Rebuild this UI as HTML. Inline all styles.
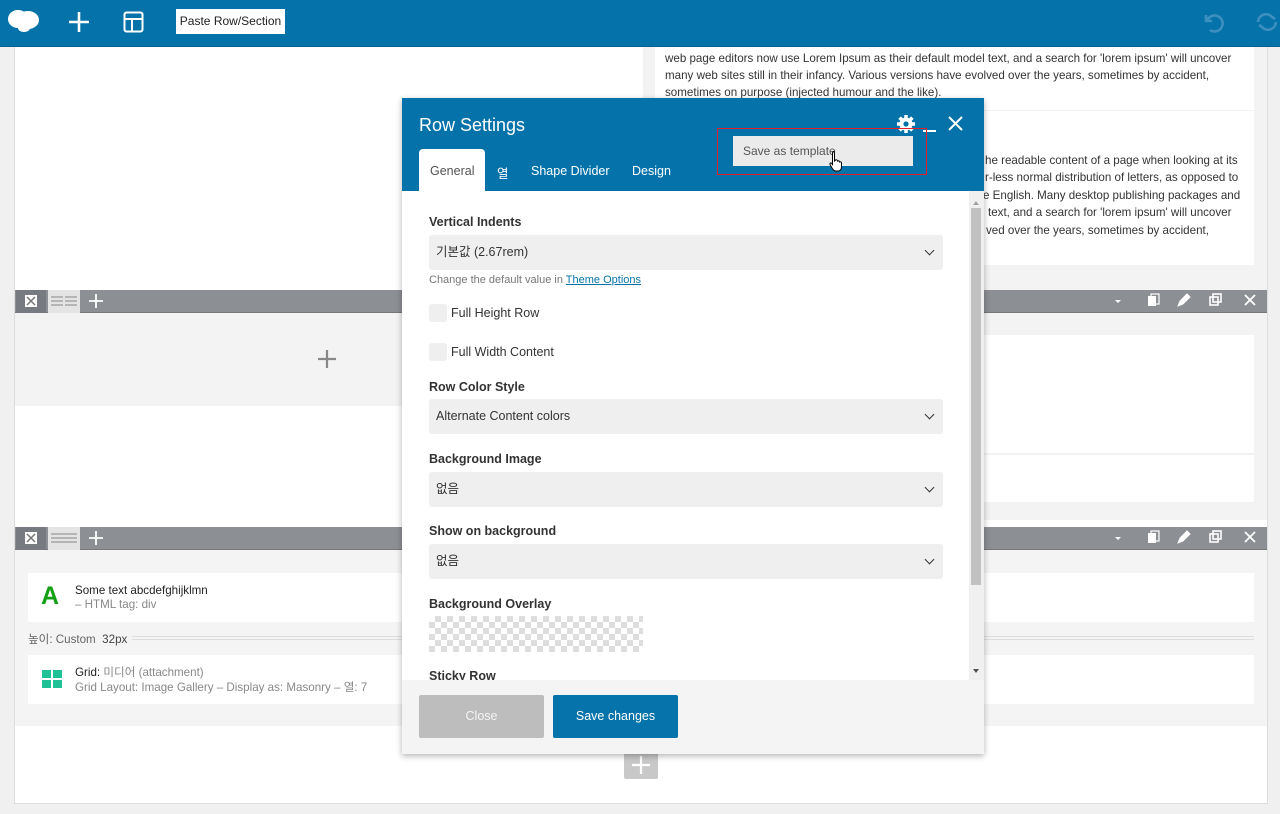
<!DOCTYPE html>
<html><head><meta charset="utf-8">
<style>
*{box-sizing:border-box;margin:0;padding:0}
body{width:1280px;height:814px;overflow:hidden;background:#f0f0f0;font-family:"Liberation Sans","Noto Sans CJK KR",sans-serif;font-size:12px;color:#333;position:relative}
.a{position:absolute}
.top{left:0;top:0;width:1280px;height:47px;background:#0573aa;border-bottom:1px solid #04608f}
.paste{left:176px;top:9px;width:109px;height:25px;background:#fff;color:#222;font-size:12px;line-height:25px;text-align:center}
.main{left:14px;top:47px;width:1254px;height:757px;background:#fff;border:1px solid #ddd;border-top:none}
.tb{left:15px;width:1252px;height:23px;background:#8c8f94;border-bottom:1px solid #777}
.txt{font-size:11.6px;color:#333;white-space:nowrap;line-height:17px}
.card{background:#fff}
.modal{left:402px;top:98px;width:582px;height:656px;background:#fff;box-shadow:0 2px 6px rgba(0,0,0,.3)}
.mh{left:0;top:0;width:582px;height:93px;background:#0573aa}
.lbl{left:27px;font-weight:bold;font-size:12.5px;color:#333}
.sel{left:27px;width:514px;height:35px;background:#efefef;border-radius:3px;padding-left:7px;line-height:35px;font-size:12.5px;color:#333}
.sel:after{content:"";position:absolute;right:10px;top:12px;width:6px;height:6px;border-right:1.5px solid #333;border-bottom:1.5px solid #333;transform:rotate(45deg)}
.cb{left:27px;width:18px;height:18px;background:#efefef;border-radius:3px}
.cbl{left:49px;font-size:12.5px;color:#333}
.tab{top:65px;color:#fff;font-size:12.5px}
</style></head><body>
<div class="a top"></div>
<svg class="a" style="left:6px;top:8px" width="36" height="28" viewBox="0 0 36 28"><ellipse cx="12" cy="11" rx="10" ry="9" fill="#fff"/><ellipse cx="22" cy="12" rx="11" ry="9" fill="#fff"/><ellipse cx="18" cy="20" rx="6" ry="4" fill="#fff"/></svg>
<svg class="a" style="left:68px;top:11px" width="22" height="22"><path d="M11 1v20M1 11h20" stroke="#fff" stroke-width="2.6"/></svg>
<svg class="a" style="left:123px;top:11px" width="21" height="22"><rect x="1.5" y="1.5" width="18" height="19" rx="2" fill="none" stroke="#fff" stroke-width="2"/><path d="M2 8h17M9 8v12" stroke="#fff" stroke-width="2"/></svg>
<div class="a paste">Paste Row/Section</div>
<svg class="a" style="left:1200px;top:10px" width="26" height="24"><path d="M6 5v6h6M7 11a8 8 0 1 1 3 9" fill="none" stroke="#3c8fbf" stroke-width="2.6"/></svg>
<svg class="a" style="left:1254px;top:10px" width="26" height="24"><path d="M4 12a8 8 0 0 1 14-5l3 2M22 12a8 8 0 0 1-14 5l-3-2" fill="none" stroke="#3c8fbf" stroke-width="2.6"/></svg>

<div class="a main"></div>
<div class="a" style="left:643px;top:47px;width:624px;height:243px;background:#f3f3f3"></div>
<div class="a card" style="left:655px;top:47px;width:599px;height:63px"></div>
<div class="a card" style="left:655px;top:111px;width:599px;height:154px"></div>
<div class="a txt" style="left:665px;top:50px">web page editors now use Lorem Ipsum as their default model text, and a search for 'lorem ipsum' will uncover</div>
<div class="a txt" style="left:665px;top:67px">many web sites still in their infancy. Various versions have evolved over the years, sometimes by accident,</div>
<div class="a txt" style="left:665px;top:84px">sometimes on purpose (injected humour and the like).</div>
<div class="a txt" style="left:985px;top:152px">he readable content of a page when looking at its</div>
<div class="a txt" style="left:985px;top:169px">r-less normal distribution of letters, as opposed to</div>
<div class="a txt" style="left:983px;top:187px">e English. Many desktop publishing packages and</div>
<div class="a txt" style="left:988px;top:204px">text, and a search for 'lorem ipsum' will uncover</div>
<div class="a txt" style="left:986px;top:222px">ved over the years, sometimes by accident,</div>

<div class="a tb" style="top:290px"></div>
<div class="a" style="left:16px;top:290px;width:30px;height:23px;background:#777a80"></div>
<div class="a" style="left:48px;top:290px;width:32px;height:23px;background:#e4e4e4"></div>
<svg class="a" style="left:25px;top:295px" width="12" height="12"><rect width="12" height="12" fill="#fff"/><path d="M2 2l8 8M10 2l-8 8" stroke="#777" stroke-width="1.5"/></svg>
<svg class="a" style="left:50px;top:295px" width="28" height="12"><path d="M1 2h12M15 2h12M1 6h12M15 6h12M1 10h12M15 10h12" stroke="#999" stroke-width="1.3"/></svg>
<svg class="a" style="left:89px;top:294px" width="14" height="14"><path d="M7 0v14M0 7h14" stroke="#fff" stroke-width="1.8"/></svg>
<div class="a" style="left:15px;top:313px;width:388px;height:93px;background:#f3f3f3"></div>
<svg class="a" style="left:318px;top:350px" width="18" height="18"><path d="M9 0v18M0 9h18" stroke="#888" stroke-width="2.2"/></svg>
<div class="a" style="left:984px;top:313px;width:283px;height:207px;background:#f3f3f3"></div>
<div class="a card" style="left:984px;top:335px;width:270px;height:118px"></div>
<div class="a card" style="left:984px;top:455px;width:270px;height:47px"></div>

<div class="a tb" style="top:527px"></div>
<div class="a" style="left:16px;top:527px;width:30px;height:23px;background:#777a80"></div>
<div class="a" style="left:48px;top:527px;width:32px;height:23px;background:#e4e4e4"></div>
<svg class="a" style="left:25px;top:532px" width="12" height="12"><rect width="12" height="12" fill="#fff"/><path d="M2 2l8 8M10 2l-8 8" stroke="#777" stroke-width="1.5"/></svg>
<svg class="a" style="left:50px;top:532px" width="28" height="12"><path d="M1 2h26M1 6h26M1 10h26" stroke="#999" stroke-width="1.3"/></svg>
<svg class="a" style="left:89px;top:531px" width="14" height="14"><path d="M7 0v14M0 7h14" stroke="#fff" stroke-width="1.8"/></svg>
<svg class="a" style="left:1110px;top:290px" width="150" height="260">
<g fill="#fff" stroke="#fff">
<path d="M5 10h6l-3 3z" stroke="none"/>
<rect x="38" y="6" width="8" height="10" stroke="none"/><rect x="41" y="4" width="8" height="10" fill="none" stroke-width="1.2"/>
<path d="M68 16l2-5 7-7 3 3-7 7z" stroke-width="1"/>
<rect x="100" y="7" width="8" height="8" fill="none" stroke-width="1.6"/><rect x="103" y="4" width="8" height="8" fill="none" stroke-width="1.6"/>
<path d="M135 5l10 10M145 5l-10 10" stroke-width="1.8"/>
</g>
<g fill="#fff" stroke="#fff" transform="translate(0,237)">
<path d="M5 10h6l-3 3z" stroke="none"/>
<rect x="38" y="6" width="8" height="10" stroke="none"/><rect x="41" y="4" width="8" height="10" fill="none" stroke-width="1.2"/>
<path d="M68 16l2-5 7-7 3 3-7 7z" stroke-width="1"/>
<rect x="100" y="7" width="8" height="8" fill="none" stroke-width="1.6"/><rect x="103" y="4" width="8" height="8" fill="none" stroke-width="1.6"/>
<path d="M135 5l10 10M145 5l-10 10" stroke-width="1.8"/>
</g></svg>
<div class="a" style="left:15px;top:550px;width:1252px;height:176px;background:#f4f4f4"></div>
<div class="a card" style="left:28px;top:573px;width:1226px;height:49px"></div>
<div class="a" style="left:41px;top:582px;font-size:25px;font-weight:bold;color:#14a014;font-family:'Liberation Sans',sans-serif">A</div>
<div class="a txt" style="left:75px;top:582px;color:#222">Some text abcdefghijklmn</div>
<div class="a txt" style="left:75px;top:596px;color:#888">– HTML tag: div</div>
<div class="a txt" style="left:28px;top:631px;color:#666">높이: Custom &nbsp;<span style="color:#444">32px</span></div>
<div class="a" style="left:132px;top:636px;width:1122px;height:4px;border-top:1px solid #ddd;border-bottom:1px solid #ddd"></div>
<div class="a card" style="left:28px;top:655px;width:1226px;height:49px"></div>
<svg class="a" style="left:42px;top:670px" width="20" height="18"><rect width="9" height="8" fill="#1fc297"/><rect x="11" width="9" height="8" fill="#1fc297"/><rect y="10" width="9" height="8" fill="#1fc297"/><rect x="11" y="10" width="9" height="8" fill="#1fc297"/></svg>
<div class="a txt" style="left:75px;top:664px;color:#222">Grid: <span style="color:#888">미디어 (attachment)</span></div>
<div class="a txt" style="left:75px;top:679px;color:#888">Grid Layout: Image Gallery – Display as: Masonry – 열: 7</div>
<div class="a" style="left:624px;top:750px;width:34px;height:29px;background:#c8c8c8;border-radius:2px"></div>
<svg class="a" style="left:632px;top:756px" width="18" height="18"><path d="M9 0v18M0 9h18" stroke="#fff" stroke-width="2.2"/></svg>

<div class="a modal">
 <div class="a mh"></div>
 <div class="a" style="left:17px;top:17px;color:#fff;font-size:18px">Row Settings</div>
 <div class="a" style="left:17px;top:51px;width:66px;height:42px;background:#fff;border-radius:4px 4px 0 0"></div>
 <div class="a" style="left:28px;top:66px;color:#555;font-size:12.5px">General</div>
 <div class="a tab" style="left:95px">열</div>
 <div class="a tab" style="left:129px;top:66px">Shape Divider</div>
 <div class="a tab" style="left:230px;top:66px">Design</div>
 <svg class="a" style="left:494px;top:16px" width="20" height="20"><circle cx="10" cy="10" r="6.5" fill="#fff"/><g stroke="#fff" stroke-width="3.5"><path d="M10 1v18M1 10h18M3.6 3.6l12.8 12.8M16.4 3.6L3.6 16.4"/></g><circle cx="10" cy="10" r="2.6" fill="#0573aa"/></svg>
 <div class="a" style="left:521px;top:32px;width:13px;height:2px;background:#fff"></div>
 <svg class="a" style="left:546px;top:18px" width="15" height="15"><path d="M1 1l13 13M14 1L1 14" stroke="#fff" stroke-width="2"/></svg>
 <div class="a" style="left:331px;top:38px;width:180px;height:30px;background:#ebebeb;color:#555;font-size:12px;line-height:30px;padding-left:10px">Save as template</div>
 <svg class="a" style="left:427px;top:52px" width="16" height="22"><path d="M4 1.5c1 0 1.5.5 1.5 1.5v8l1-1c1-.5 2 0 2 1 1-.7 2 0 2 1 1-.6 2 0 2 1v4c0 2-1.5 4-3 4H6.5c-1.5 0-2.5-1-3.5-3l-2-3.5c-.5-1 .5-2 1.5-1.3l1 1.3V3c0-1 .5-1.5 1.5-1.5z" fill="#fff" stroke="#000" stroke-width="1"/></svg>
 <div class="a" style="left:315px;top:30px;width:210px;height:47px;border:1.5px solid #e0202a"></div>
 <div class="a lbl" style="top:117px">Vertical Indents</div>
 <div class="a sel" style="top:137px">기본값 (2.67rem)</div>
 <div class="a" style="left:27px;top:176px;font-size:11px;color:#777">Change the default value in <span style="color:#0573aa;text-decoration:underline">Theme Options</span></div>
 <div class="a cb" style="top:206px"></div><div class="a cbl" style="top:208px">Full Height Row</div>
 <div class="a cb" style="top:245px"></div><div class="a cbl" style="top:247px">Full Width Content</div>
 <div class="a lbl" style="top:282px">Row Color Style</div>
 <div class="a sel" style="top:301px">Alternate Content colors</div>
 <div class="a lbl" style="top:354px">Background Image</div>
 <div class="a sel" style="top:374px">없음</div>
 <div class="a lbl" style="top:426px">Show on background</div>
 <div class="a sel" style="top:446px">없음</div>
 <div class="a lbl" style="top:499px">Background Overlay</div>
 <div class="a" style="left:27px;top:518px;width:214px;height:36px;background-color:#fff;background-image:linear-gradient(45deg,#ddd 25%,transparent 25%,transparent 75%,#ddd 75%),linear-gradient(45deg,#ddd 25%,transparent 25%,transparent 75%,#ddd 75%);background-size:12px 12px;background-position:0 0,6px 6px"></div>
 <div class="a lbl" style="top:571px;height:11px;overflow:hidden">Sticky Row</div>
 <div class="a" style="left:567px;top:93px;width:15px;height:489px;background:#f0f0f0"></div>
 <div class="a" style="left:569px;top:110px;width:10px;height:377px;background:#c1c1c1"></div>
 <div class="a" style="left:571px;top:100px;width:0;height:0;border:3px solid transparent;border-bottom:4px solid #a3a3a3"></div>
 <div class="a" style="left:571px;top:571px;width:0;height:0;border:3px solid transparent;border-top:4px solid #505050"></div>
 <div class="a" style="left:0;top:582px;width:582px;height:74px;background:#f4f4f4"></div>
 <div class="a" style="left:17px;top:597px;width:125px;height:43px;background:#bdbdbd;color:#f4f4f4;border-radius:2px;text-align:center;line-height:43px;font-size:12.5px">Close</div>
 <div class="a" style="left:151px;top:597px;width:125px;height:43px;background:#0673aa;color:#fff;border-radius:2px;text-align:center;line-height:43px;font-size:12.5px">Save changes</div>
</div>
</body></html>
